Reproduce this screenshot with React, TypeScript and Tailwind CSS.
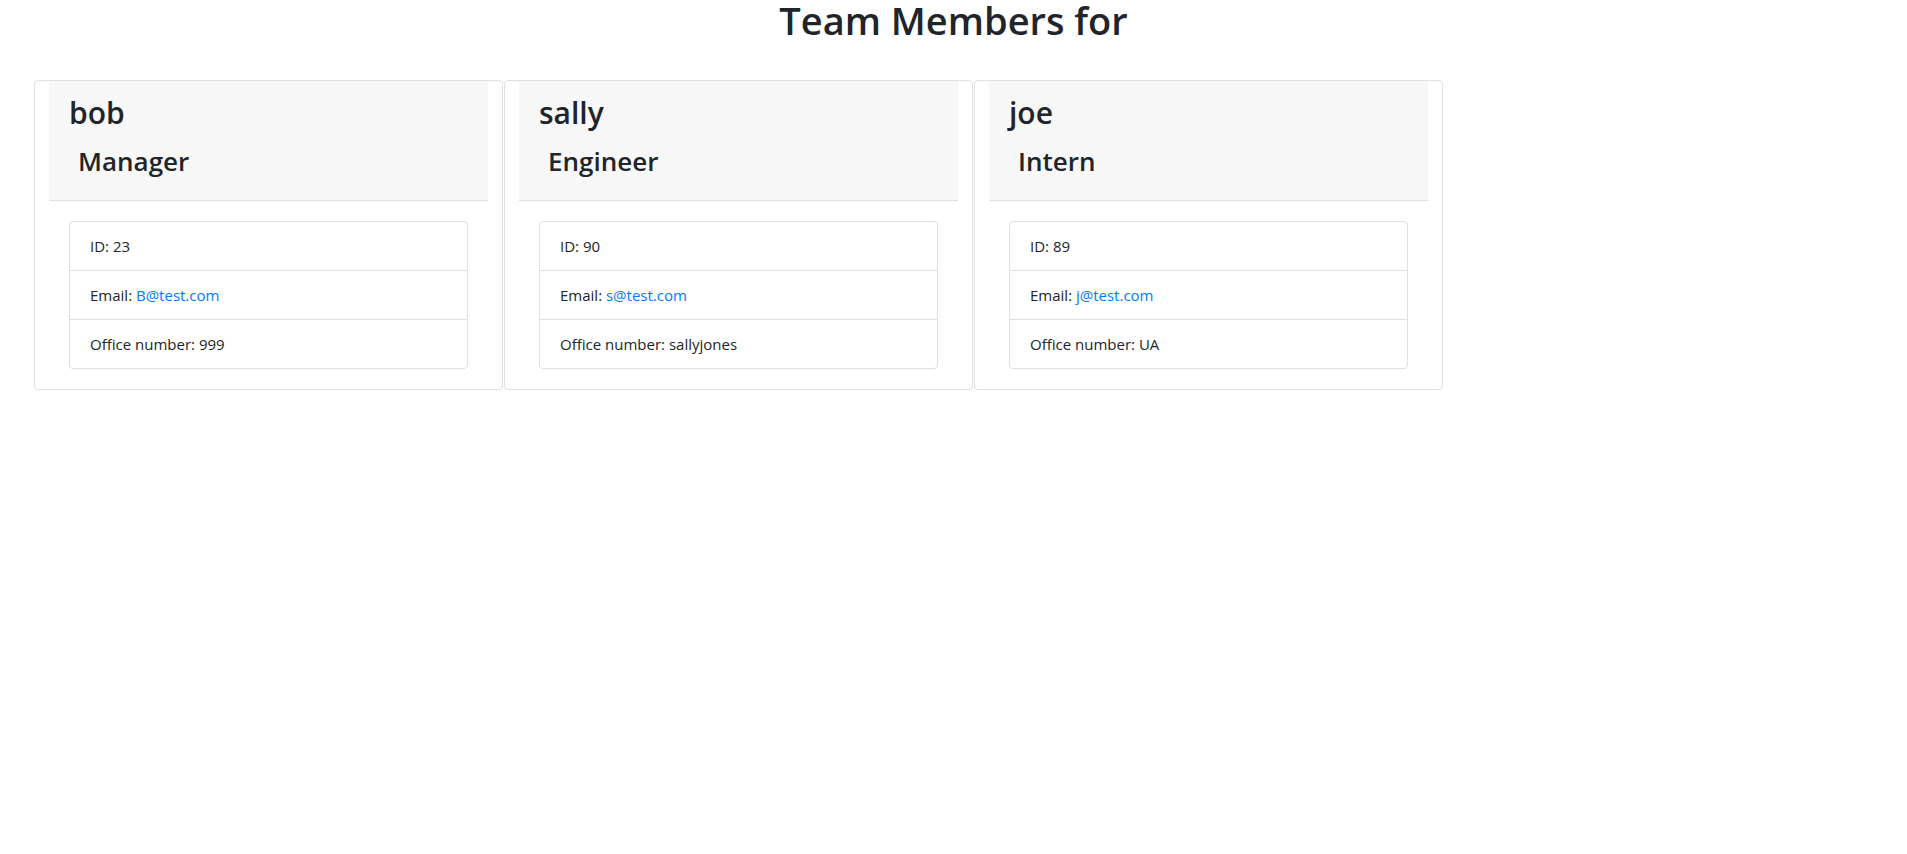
const members = [
  { name: "bob", role: "Manager", id: 23, email: "B@test.com", extraLabel: "Office number", extra: "999" },
  { name: "sally", role: "Engineer", id: 90, email: "s@test.com", extraLabel: "Office number", extra: "sallyjones" },
  { name: "joe", role: "Intern", id: 89, email: "j@test.com", extraLabel: "Office number", extra: "UA" },
];

function MemberCard({ name, role, id, email, extraLabel, extra }: (typeof members)[number]) {
  return (
    <div className="w-[469px] shrink-0 rounded border border-[#dfdfdf] px-[14px]">
      <div className="bg-[#f7f7f7] border-b border-[#dfdfdf] px-5 pt-[13px] pb-[23px]">
        <h2 className="text-[30px] leading-[37px] font-semibold">{name}</h2>
        <h3 className="mt-[14px] pl-[9px] text-[26px] leading-[32px] font-semibold">{role}</h3>
      </div>
      <div className="p-5">
        <ul className="rounded border border-[#dfdfdf] text-[15px] leading-6">
          <li className="px-5 py-3">ID: {id}</li>
          <li className="px-5 py-3 border-t border-[#dfdfdf]">
            Email: <a href={`mailto:${email}`} className="text-[#007bff]">{email}</a>
          </li>
          <li className="px-5 py-3 border-t border-[#dfdfdf]">
            {extraLabel}: {extra}
          </li>
        </ul>
      </div>
    </div>
  );
}

export default function App() {
  return (
    <div className="min-h-screen bg-white text-[#212529] font-['Open_Sans',sans-serif]">
      <h1 className="text-center text-[38px] leading-[40px] font-semibold">Team Members for</h1>
      <div className="mt-[40px] flex gap-[1px] pl-[34px]">
        {members.map((m) => (
          <MemberCard key={m.id} {...m} />
        ))}
      </div>
    </div>
  );
}
